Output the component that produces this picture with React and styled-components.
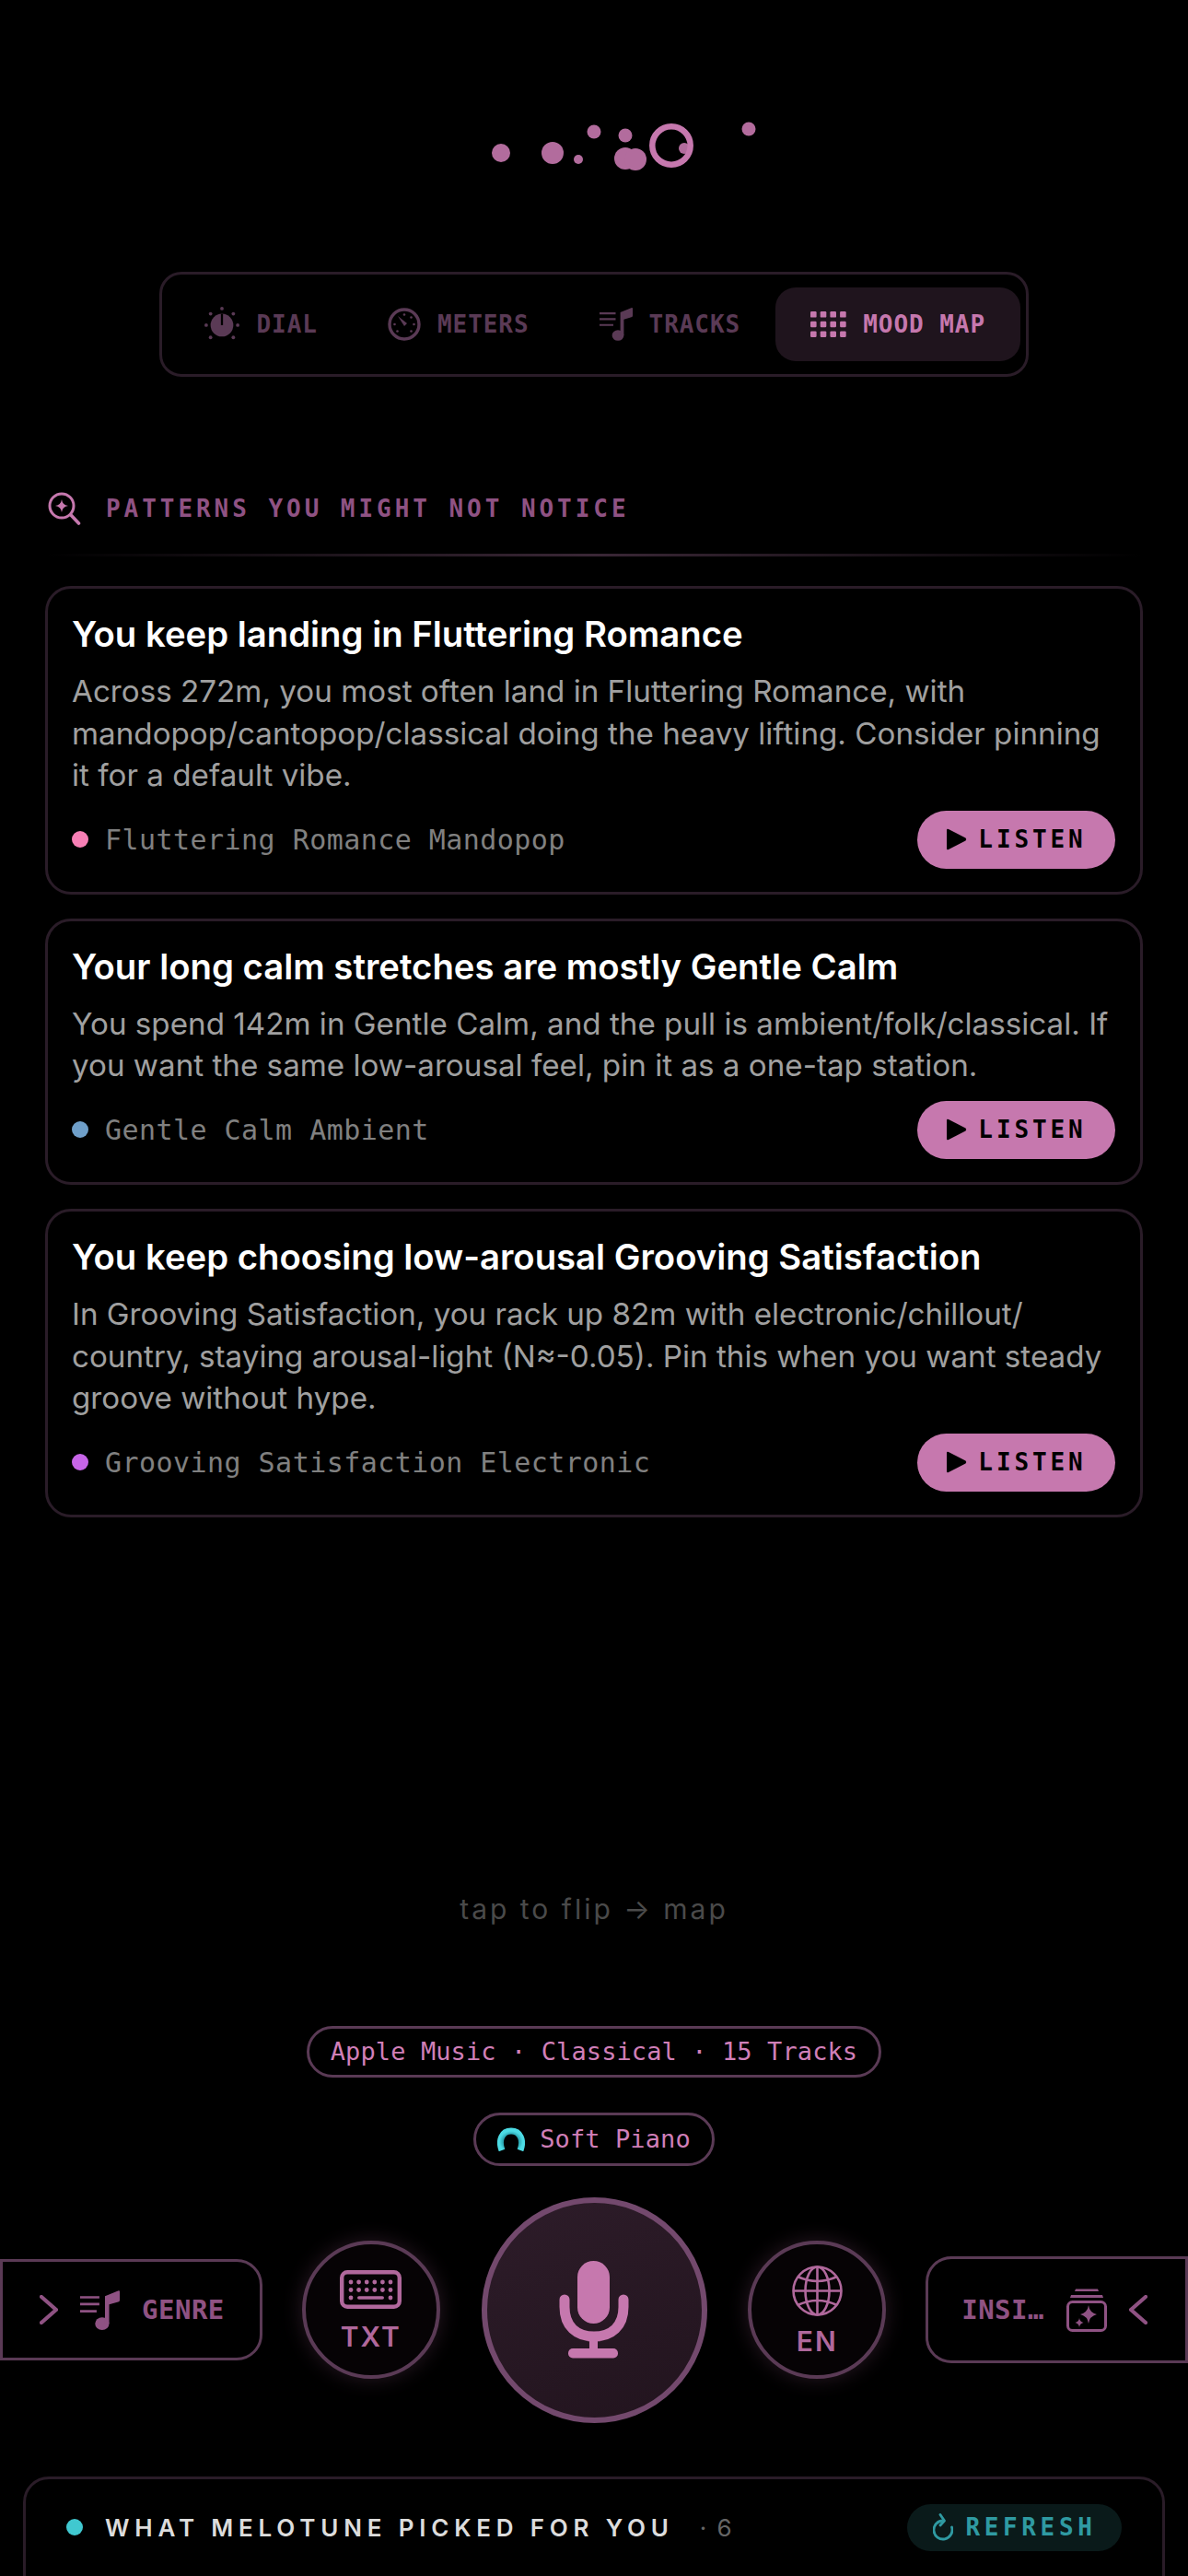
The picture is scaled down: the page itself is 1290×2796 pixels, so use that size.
import React from 'react';
import styled, { createGlobalStyle } from 'styled-components';

const MONO = `"DejaVu Sans Mono", "Liberation Mono", monospace`;
const SANS = `Inter, "Noto Sans", sans-serif`;
const PINK = '#c678ae';
const DIM = '#5a3a55';
const MID = '#8f5283';

const GlobalStyle = createGlobalStyle`
  html, body {
    margin: 0;
    padding: 0;
    background: #000;
    overflow: hidden;
  }
`;

const Page = styled.div`
  width: 1290px;
  height: 2796px;
  overflow: hidden;
  background: #000;
  font-family: ${SANS};
`;

const LogoWrap = styled.div`
  height: 185px;
  padding-top: 110px;
  display: flex;
  justify-content: center;
  svg {
    display: block;
  }
`;

const TabBar = styled.div`
  width: 944px;
  height: 114px;
  box-sizing: border-box;
  margin: 0 auto;
  padding: 14px 8px 14px 6.5px;
  display: flex;
  border: 3px solid #2a1c28;
  border-radius: 24px;
`;

const Tab = styled.div`
  display: flex;
  align-items: center;
  gap: 18px;
  padding: 0 38px;
  border-radius: 22px;
  background: ${p => (p.$active ? '#1f141d' : 'transparent')};
  color: ${p => (p.$active ? PINK : DIM)};
  font-family: ${MONO};
  font-weight: 700;
  font-size: 26px;
  letter-spacing: 0.95px;
  white-space: nowrap;
`;

const SectionHead = styled.div`
  margin-top: 123px;
  padding-left: 52px;
  height: 40px;
  display: flex;
  align-items: center;
  gap: 27px;
  color: ${MID};
  font-family: ${MONO};
  font-weight: 700;
  font-size: 26px;
  letter-spacing: 3.95px;
`;

const Rule = styled.div`
  height: 3px;
  margin: 29px 50px 32px;
  background: linear-gradient(90deg, transparent, #3a2736 50%, transparent);
`;

const Cards = styled.div`
  margin: 0 49px;
  display: flex;
  flex-direction: column;
  gap: 26px;
`;

const Card = styled.div`
  box-sizing: border-box;
  border: 3px solid #2a1c28;
  border-radius: 28px;
  padding: 25px 27px 25px 26px;
`;

const CardTitle = styled.div`
  color: #fff;
  font-weight: 600;
  font-size: 38.3px;
  line-height: 48px;
  margin-bottom: 16px;
`;

const CardBody = styled.div`
  color: #a0a0a0;
  font-size: 33.2px;
  line-height: 45.6px;
  margin-bottom: 15px;
`;

const CardFoot = styled.div`
  height: 63px;
  display: flex;
  align-items: center;
  justify-content: space-between;
`;

const Tag = styled.div`
  display: flex;
  align-items: center;
  gap: 18px;
  color: #808080;
  font-family: ${MONO};
  font-size: 30px;
  letter-spacing: 0.45px;
`;

const TagDot = styled.span`
  width: 18px;
  height: 18px;
  border-radius: 50%;
  background: ${p => p.$color};
`;

const Listen = styled.div`
  width: 215px;
  height: 63px;
  border-radius: 32px;
  background: ${PINK};
  color: #000;
  display: flex;
  align-items: center;
  justify-content: center;
  gap: 12px;
  font-family: ${MONO};
  font-weight: 700;
  font-size: 26px;
  letter-spacing: 3.9px;
`;

const Hint = styled.div`
  margin-top: 405px;
  text-align: center;
  color: #4a4a4a;
  font-size: 30px;
  line-height: 40px;
  letter-spacing: 3px;
`;

const Pill = styled.div`
  width: fit-content;
  box-sizing: border-box;
  height: ${p => p.$h}px;
  margin: ${p => p.$top}px auto 0;
  padding: 0 23px;
  display: flex;
  align-items: center;
  gap: 16px;
  border: 3px solid ${DIM};
  border-radius: 30px;
  color: #d07fb8;
  font-family: ${MONO};
  font-size: 27px;
  letter-spacing: 0.1px;
`;

const Controls = styled.div`
  margin-top: 34px;
  height: 245px;
  display: flex;
  align-items: center;
  justify-content: space-between;
`;

const SideButton = styled.div`
  box-sizing: border-box;
  width: 285px;
  height: ${p => p.$h}px;
  display: flex;
  align-items: center;
  border: 3px solid ${DIM};
  border-radius: ${p => (p.$right ? '28px 0 0 28px' : '0 28px 28px 0')};
  justify-content: ${p => (p.$right ? 'flex-end' : 'flex-start')};
  padding: ${p => (p.$right ? '0 41px 0 0' : '0 0 0 40px')};
  gap: 24px;
  color: ${MID};
  font-family: ${MONO};
  font-weight: 700;
  font-size: 29px;
  letter-spacing: 0.5px;
`;

const RoundButton = styled.div`
  box-sizing: border-box;
  width: 150px;
  height: 150px;
  border-radius: 50%;
  border: 4px solid ${DIM};
  background: #060305;
  box-shadow: 0 0 22px rgba(198, 120, 174, 0.2);
  display: flex;
  flex-direction: column;
  align-items: center;
  justify-content: center;
  gap: ${p => p.$gap}px;
  color: #b0689c;
  font-weight: 600;
  font-size: 30px;
  line-height: 30px;
  letter-spacing: 2px;
`;

const MicButton = styled.div`
  box-sizing: border-box;
  width: 245px;
  height: 245px;
  margin: 0 2px;
  border-radius: 50%;
  border: 6px solid #73496d;
  background: linear-gradient(160deg, #2d1c29, #22141e);
  display: flex;
  align-items: center;
  justify-content: center;
`;

const Panel = styled.div`
  box-sizing: border-box;
  margin: 58px 25px 0;
  height: 200px;
  border: 3px solid #2a1c28;
  border-radius: 28px;
  padding: 27px 44px 0;
  display: flex;
  align-items: flex-start;
  justify-content: space-between;
`;

const PanelTitle = styled.div`
  height: 51px;
  display: flex;
  align-items: center;
  gap: 24px;
  color: #dcdcdc;
  font-weight: 600;
  font-size: 26px;
  letter-spacing: 5.8px;
`;

const PanelDot = styled.span`
  width: 18px;
  height: 18px;
  border-radius: 50%;
  background: #40c8d0;
`;

const PanelCount = styled.span`
  margin-left: 4px;
  color: #666;
  font-weight: 400;
  letter-spacing: 2px;
`;

const Refresh = styled.div`
  width: 233px;
  height: 51px;
  border-radius: 26px;
  background: #0a1a1a;
  color: #2f9aa2;
  display: flex;
  align-items: center;
  justify-content: center;
  gap: 14px;
  font-family: ${MONO};
  font-weight: 700;
  font-size: 26px;
  letter-spacing: 4.6px;
`;

const Logo = () => (
  <svg width="600" height="100" viewBox="345 110 600 100" fill={PINK}>
    <g opacity="0.9">
      <circle cx="544" cy="166" r="10" />
      <circle cx="600" cy="166" r="12" />
      <circle cx="628" cy="173" r="5" />
      <circle cx="645" cy="143" r="7.5" />
      <circle cx="679" cy="147" r="7.5" />
      <circle cx="679" cy="172" r="12" />
      <circle cx="690" cy="173" r="12" />
      <circle cx="743" cy="161" r="6" />
      <circle cx="813" cy="140" r="7.5" />
    </g>
    <circle cx="729" cy="158" r="20.7" fill="none" stroke={PINK} strokeWidth="6.5" />
  </svg>
);

const DialIcon = () => (
  <svg width="40" height="38" viewBox="-1 0 42 40" fill="currentColor">
    <circle cx="20" cy="21" r="13" />
    <rect x="18.8" y="8" width="2.4" height="13" fill="#000" />
    <circle cx="20" cy="2" r="2" />
    <circle cx="7" cy="8" r="2" />
    <circle cx="33" cy="8" r="2" />
    <circle cx="2" cy="21" r="2" />
    <circle cx="38" cy="21" r="2" />
    <circle cx="7" cy="35" r="2" />
    <circle cx="33" cy="35" r="2" />
  </svg>
);

const GaugeIcon = () => (
  <svg width="36" height="36" viewBox="0 0 36 36" fill="currentColor">
    <circle cx="18" cy="18" r="16" fill="none" stroke="currentColor" strokeWidth="3.4" />
    <path d="M11 9 L21 17 L18 20 Z" />
    <circle cx="18" cy="7.5" r="1.3" />
    <circle cx="25.5" cy="10.5" r="1.3" />
    <circle cx="28.5" cy="18" r="1.3" />
    <circle cx="25.5" cy="25.5" r="1.3" />
    <circle cx="10.5" cy="25.5" r="1.3" />
    <circle cx="7.5" cy="18" r="1.3" />
  </svg>
);

const TracksIcon = ({ size = 36 }) => (
  <svg width={size} height={size * 1.03} viewBox="0 0 36 37" fill="currentColor">
    <path d="M0 6h17.5v2.2H0zM0 12.2h17.5v2.2H0zM0 18.6h15v2.2H0z" />
    <ellipse cx="20" cy="31" rx="6.4" ry="5.8" />
    <path d="M22.6 6 L35 1 Q36 0.8 36 2 L36 9.5 Q36 11 34.6 11.3 L26.4 13.6 L26.4 31 L22.6 31 Z" />
  </svg>
);

const GridIcon = () => {
  const cells = [];
  for (let r = 0; r < 3; r++) {
    for (let c = 0; c < 4; c++) {
      cells.push(<rect key={`${r}-${c}`} x={c * 10.7} y={r * 10.7} width="6.6" height="6.6" rx="1.2" />);
    }
  }
  return (
    <svg width="39" height="28" viewBox="0 0 39 28" fill="currentColor">
      {cells}
    </svg>
  );
};

const InsightIcon = () => (
  <svg width="36" height="36" viewBox="0 0 36 36" fill="none" stroke={PINK} strokeWidth="3">
    <circle cx="15" cy="15" r="13" />
    <path d="M25 25 L33.5 34" strokeLinecap="round" strokeWidth="3.6" />
    <path d="M15 8 Q15.8 14.2 22 15 Q15.8 15.8 15 22 Q14.2 15.8 8 15 Q14.2 14.2 15 8 Z" fill={PINK} stroke="none" />
  </svg>
);

const PlayIcon = () => (
  <svg width="23" height="24" viewBox="0 0 23 24" fill="#000">
    <path d="M1 2 Q1 0 3 1 L21.5 10.6 Q23 12 21.5 13.4 L3 23 Q1 24 1 22 Z" />
  </svg>
);

const Chevron = ({ left }) => (
  <svg width="20" height="32" viewBox="0 0 20 32" fill="none" stroke="currentColor" strokeWidth="4.2" strokeLinecap="round" strokeLinejoin="round">
    <path d={left ? 'M18 2 L2 16 L18 30' : 'M2 2 L18 16 L2 30'} />
  </svg>
);

const KeyboardIcon = () => {
  const keys = [];
  [13, 21.5].forEach(y => {
    [12, 20.6, 29.2, 37.8, 46.4, 55].forEach(x => {
      keys.push(<circle key={`${x}-${y}`} cx={x} cy={y} r="2.4" />);
    });
  });
  return (
    <svg width="67" height="42" viewBox="0 0 67 42" fill="currentColor">
      <rect x="2.2" y="2.2" width="62.6" height="37.6" rx="6" fill="none" stroke="currentColor" strokeWidth="4.4" />
      {keys}
      <circle cx="12" cy="30" r="2.4" />
      <rect x="19" y="28.2" width="29" height="3.6" rx="1.8" />
      <circle cx="55" cy="30" r="2.4" />
    </svg>
  );
};

const GlobeIcon = () => (
  <svg width="55" height="55" viewBox="0 0 55 55" fill="none" stroke="currentColor" strokeWidth="2.6">
    <circle cx="27.5" cy="27.5" r="26" />
    <ellipse cx="27.5" cy="27.5" rx="13" ry="26" />
    <path d="M27.5 1.5 V53.5 M1.5 27.5 H53.5" />
    <path d="M6 12 Q27.5 22 49 12 M6 43 Q27.5 33 49 43" />
  </svg>
);

const StackIcon = () => (
  <svg width="44" height="47" viewBox="0 0 44 47" fill="currentColor">
    <path d="M10 0.5 H34 L35 3 H9 Z" />
    <path d="M5 7 H39 L40 10 H4 Z" />
    <rect x="1.5" y="14.5" width="41" height="31" rx="5" fill="none" stroke="currentColor" strokeWidth="3" />
    <path d="M24 18 Q25 26 33 28 Q25 30 24 38 Q23 30 15 28 Q23 26 24 18 Z" />
    <path d="M14 32 Q14.5 36 18.5 37 Q14.5 38 14 42 Q13.5 38 9.5 37 Q13.5 36 14 32 Z" />
  </svg>
);

const MicIcon = () => (
  <svg width="76" height="106" viewBox="0 0 76 106" fill={PINK}>
    <rect x="20" y="0" width="35" height="68" rx="17.5" />
    <path d="M6 42 V50 C6 71 19 82 38 82 C57 82 70 71 70 50 V42" fill="none" stroke={PINK} strokeWidth="11" strokeLinecap="round" />
    <rect x="33" y="82" width="9" height="16" />
    <rect x="10" y="95" width="54" height="10.5" rx="5" />
  </svg>
);

const SpinnerIcon = () => (
  <svg width="30" height="26" viewBox="0 0 30 26" fill="none">
    <defs>
      <radialGradient id="spin" cx="0.5" cy="0.55" r="0.55">
        <stop offset="0.55" stopColor="#1c8f9c" />
        <stop offset="1" stopColor="#4cdbe4" />
      </radialGradient>
    </defs>
    <path d="M5 25 C1 14 5 4 15 4 C25 4 29 14 25 25" stroke="url(#spin)" strokeWidth="7" />
  </svg>
);

const RefreshIcon = () => (
  <svg width="22" height="30" viewBox="0 0 22 30" fill="none" stroke="currentColor" strokeWidth="2.8" strokeLinecap="round" strokeLinejoin="round">
    <path d="M11 8 A10 10 0 1 0 20.5 15" />
    <path d="M8 1.5 L12.5 8 L8 13" />
  </svg>
);

const TABS = [
  { label: 'DIAL', icon: <DialIcon /> },
  { label: 'METERS', icon: <GaugeIcon /> },
  { label: 'TRACKS', icon: <TracksIcon /> },
  { label: 'MOOD MAP', icon: <GridIcon />, active: true },
];

const INSIGHTS = [
  {
    title: 'You keep landing in Fluttering Romance',
    body: 'Across 272m, you most often land in Fluttering Romance, with mandopop/cantopop/classical doing the heavy lifting. Consider pinning it for a default vibe.',
    tag: 'Fluttering Romance Mandopop',
    color: '#f77fb5',
  },
  {
    title: 'Your long calm stretches are mostly Gentle Calm',
    body: 'You spend 142m in Gentle Calm, and the pull is ambient/folk/classical. If you want the same low-arousal feel, pin it as a one-tap station.',
    tag: 'Gentle Calm Ambient',
    color: '#6f9fc9',
  },
  {
    title: 'You keep choosing low-arousal Grooving Satisfaction',
    body: 'In Grooving Satisfaction, you rack up 82m with electronic/chillout/\u200bcountry, staying arousal-light (N≈-0.05). Pin this when you want steady groove without hype.',
    tag: 'Grooving Satisfaction Electronic',
    color: '#c765e8',
  },
];

const App = () => (
  <Page>
    <GlobalStyle />
    <LogoWrap>
      <Logo />
    </LogoWrap>
    <TabBar>
      {TABS.map(t => (
        <Tab key={t.label} $active={t.active}>
          {t.icon}
          {t.label}
        </Tab>
      ))}
    </TabBar>
    <SectionHead>
      <InsightIcon />
      PATTERNS YOU MIGHT NOT NOTICE
    </SectionHead>
    <Rule />
    <Cards>
      {INSIGHTS.map(i => (
        <Card key={i.tag}>
          <CardTitle>{i.title}</CardTitle>
          <CardBody>{i.body}</CardBody>
          <CardFoot>
            <Tag>
              <TagDot $color={i.color} />
              {i.tag}
            </Tag>
            <Listen>
              <PlayIcon />
              LISTEN
            </Listen>
          </CardFoot>
        </Card>
      ))}
    </Cards>
    <Hint>tap to flip → map</Hint>
    <Pill $h={56} $top={107}>Apple Music · Classical · 15 Tracks</Pill>
    <Pill $h={58} $top={38}>
      <SpinnerIcon />
      Soft Piano
    </Pill>
    <Controls>
      <SideButton $h={110}>
        <Chevron />
        <TracksIcon size={43} />
        GENRE
      </SideButton>
      <RoundButton $gap={15}>
        <KeyboardIcon />
        TXT
      </RoundButton>
      <MicButton>
        <MicIcon />
      </MicButton>
      <RoundButton $gap={12}>
        <GlobeIcon />
        EN
      </RoundButton>
      <SideButton $h={116} $right>
        INSI…
        <StackIcon />
        <Chevron left />
      </SideButton>
    </Controls>
    <Panel>
      <PanelTitle>
        <PanelDot />
        WHAT MELOTUNE PICKED FOR YOU
        <PanelCount>· 6</PanelCount>
      </PanelTitle>
      <Refresh>
        <RefreshIcon />
        REFRESH
      </Refresh>
    </Panel>
  </Page>
);

export default App;
